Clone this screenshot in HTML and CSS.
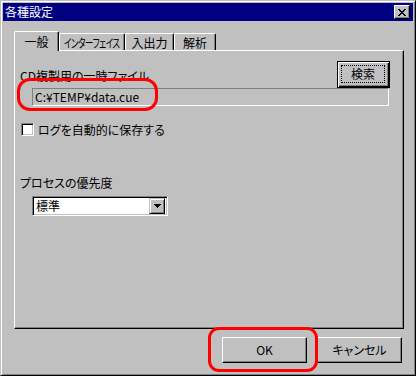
FILE: index.html
```html
<!DOCTYPE html>
<html lang="ja">
<head>
    <meta charset="UTF-8">
    <title>各種設定</title>
    <link rel="stylesheet" href="styles.css">
</head>
<body>
<div class="window">
    <div class="titlebar">
        <span class="title">各種設定</span>
        <span class="close">
            <svg width="8" height="7" viewBox="0 0 8 7" shape-rendering="crispEdges">
                <path d="M0 0h2v1h-2zM6 0h2v1h-2zM1 1h2v1h-2zM5 1h2v1h-2zM2 2h4v1h-4zM3 3h2v1h-2zM2 4h4v1h-4zM1 5h2v1h-2zM5 5h2v1h-2zM0 6h2v1h-2zM6 6h2v1h-2z" fill="#000"/>
            </svg>
        </span>
    </div>
    <div class="content">
        <!--タブ-->
        <div class="tabs">
            <div class="tab active tab1">一般</div>
            <div class="tab tab2"><span class="narrow">インターフェイス</span></div>
            <div class="tab tab3">入出力</div>
            <div class="tab tab4">解析</div>
        </div>
        <div class="panel">
            <div class="file-row">
                <span class="file-label">CD複製用の一時ファイル</span>
                <span class="btn default"><span class="focus">検索</span></span>
            </div>
            <div class="textbox">C:¥TEMP¥data.cue</div>
            <div class="check-row">
                <span class="checkbox"></span>
                <span class="check-label">ログを自動的に保存する</span>
            </div>
            <div class="prio-label">プロセスの優先度</div>
            <div class="select">
                <span class="select-text">標準</span>
                <span class="drop">
                    <svg width="7" height="4" viewBox="0 0 7 4" shape-rendering="crispEdges">
                        <path d="M0 0h7v1h-7zM1 1h5v1h-5zM2 2h3v1h-3zM3 3h1v1h-1z" fill="#000"/>
                    </svg>
                </span>
            </div>
        </div>
        <div class="actions">
            <span class="btn action">OK</span>
            <span class="btn action">キャンセル</span>
        </div>
    </div>
    <!--赤い枠-->
    <div class="mark mark-file"></div>
    <div class="mark mark-ok"></div>
</div>
</body>
</html>
```

FILE: styles.css
```css
* {
    margin: 0;
    padding: 0;
    box-sizing: border-box;
}

body {
    background: #c0c0c0;
    font-family: "Noto Sans CJK JP", "DejaVu Sans", sans-serif;
    font-size: 12px;
    font-feature-settings: "palt";
    color: #000;
}

.window {
    position: relative;
    width: 416px;
    height: 376px;
    background: #c0c0c0;
    border: 1px solid;
    border-color: #c0c0c0 #000 #000 #c0c0c0;
    box-shadow: inset 1px 1px #fff, inset -1px -1px #808080;
    padding: 2px;
}

.titlebar {
    height: 18px;
    background: #000080;
    display: flex;
    align-items: center;
    justify-content: space-between;
    padding: 0 3px 0 2px;
}

.title {
    color: #fff;
    font-size: 12px;
    line-height: 14px;
    font-feature-settings: normal;
}

.close {
    width: 16px;
    height: 14px;
    background: #c0c0c0;
    border: 1px solid;
    border-color: #fff #000 #000 #fff;
    box-shadow: inset -1px -1px #808080;
    display: flex;
    align-items: center;
    justify-content: center;
}

.content {
    padding: 10px 9px 0 11px;
}

.tabs {
    display: flex;
    align-items: flex-end;
    height: 19px;
    position: relative;
    z-index: 1;
}

.tab {
    display: flex;
    align-items: center;
    justify-content: center;
    height: 17px;
    border-top: 1px solid #fff;
    border-left: 1px solid #fff;
    border-right: 1px solid #000;
    box-shadow: inset -1px 0 #808080;
    border-radius: 2px 2px 0 0;
    background: #c0c0c0;
    line-height: 15px;
    font-size: 12px;
    white-space: nowrap;
}

.tab.active {
    height: 20px;
    margin-bottom: -1px;
    padding-bottom: 1px;
}

.tab1 { width: 45px; }
.tab2 { width: 66px; }
.tab3 { width: 49px; }
.tab4 { width: 42px; }

.narrow {
    display: inline-block;
    font-size: 12px;
    letter-spacing: -0.5px;
    margin: 0 -14px;
    transform: scaleX(0.7);
}

.panel {
    width: 390px;
    height: 279px;
    border-top: 1px solid #fff;
    border-left: 1px solid #fff;
    border-right: 1px solid #000;
    border-bottom: 1px solid #000;
    box-shadow: inset -1px -1px #808080;
}

.file-row {
    display: flex;
    justify-content: space-between;
    align-items: flex-end;
    margin: 10px 13px 0 5px;
}

.file-label {
    line-height: 14px;
    margin-bottom: 5px;
}

.btn {
    display: flex;
    align-items: center;
    justify-content: center;
    background: #c0c0c0;
    border: 1px solid;
    border-color: #fff #000 #000 #fff;
    box-shadow: inset -1px -1px #808080;
    font-size: 12px;
}

.btn.default {
    width: 53px;
    height: 27px;
    border: 1px solid #000;
    box-shadow: inset 1px 1px #fff, inset -1px -1px #000, inset -2px -2px #808080;
    padding: 3px 4px 4px 3px;
}

.focus {
    flex: 1;
    height: 100%;
    border: 1px dotted #000;
    display: flex;
    align-items: center;
    justify-content: center;
    line-height: 14px;
}

.textbox {
    width: 357px;
    height: 18px;
    margin-left: 17px;
    border: 1px solid;
    border-color: #808080 #fff #fff #808080;
    padding-left: 2px;
    line-height: 16px;
}

.check-row {
    display: flex;
    align-items: center;
    margin: 17px 0 0 6px;
    height: 13px;
}

.checkbox {
    width: 13px;
    height: 13px;
    background: #fff;
    border: 1px solid;
    border-color: #808080 #fff #fff #808080;
    box-shadow: inset 1px 1px #000, inset -1px -1px #c0c0c0;
}

.check-label {
    margin-left: 4px;
    line-height: 14px;
}

.prio-label {
    margin: 40px 0 0 5px;
    line-height: 14px;
}

.select {
    display: flex;
    align-items: center;
    justify-content: space-between;
    width: 136px;
    height: 20px;
    margin: 6px 0 0 17px;
    background: #fff;
    border: 1px solid;
    border-color: #808080 #fff #fff #808080;
    box-shadow: inset 1px 1px #000, inset -1px -1px #c0c0c0;
    padding: 2px 2px 2px 3px;
}

.select-text {
    line-height: 14px;
}

.drop {
    width: 16px;
    height: 16px;
    background: #c0c0c0;
    border: 1px solid;
    border-color: #c0c0c0 #000 #000 #c0c0c0;
    box-shadow: inset 1px 1px #fff, inset -1px -1px #808080;
    display: flex;
    align-items: center;
    justify-content: center;
}

.actions {
    display: flex;
    justify-content: flex-end;
    gap: 10px;
    margin: 8px 2px 0 0;
}

.btn.action {
    width: 85px;
    height: 26px;
    line-height: 14px;
}

.mark {
    position: absolute;
    border: 3px solid #f00;
    border-radius: 13px;
}

.mark-file {
    left: 16px;
    top: 77px;
    width: 141px;
    height: 33px;
}

.mark-ok {
    left: 207px;
    top: 326px;
    width: 110px;
    height: 45px;
    border-radius: 11px;
}
```
